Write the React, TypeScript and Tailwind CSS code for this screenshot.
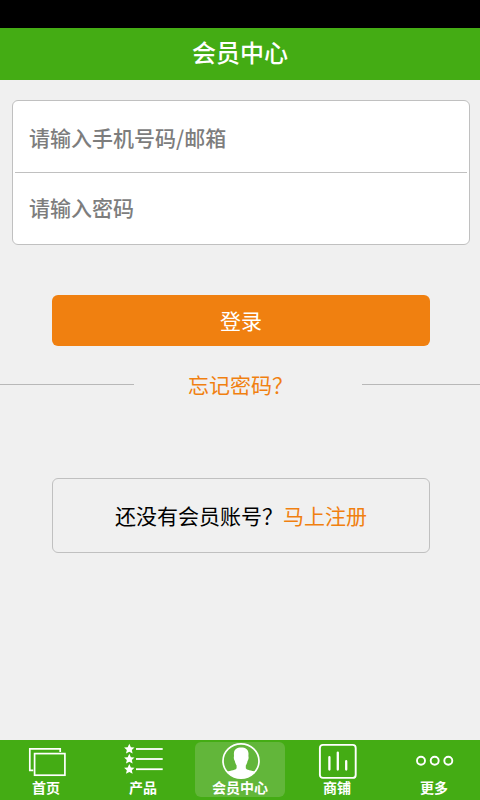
import { FormEventHandler, ReactNode, useState } from 'react';

interface Tab {
    key: string;
    label: string;
    icon: ReactNode;
}

const STAR = 'M0-5.2L1.6-1.8L5.2-1.5L2.5 1L3.3 4.6L0 2.7L-3.3 4.6L-2.5 1L-5.2-1.5L-1.6-1.8Z';

const HomeIcon = () => (
    <svg viewBox="0 0 40 36" className="h-9 w-10" fill="none" stroke="white" strokeWidth="1.7" aria-hidden="true">
        <path d="M7.3 27.4H3.8V5.8H34.2V9" />
        <rect x="8.6" y="10.6" width="30.3" height="21.6" />
    </svg>
);

const ProductIcon = () => (
    <svg viewBox="0 0 40 36" className="h-9 w-10" fill="white" aria-hidden="true">
        {[6, 16, 26.2].map((y) => (
            <g key={y}>
                <path d={STAR} transform={`translate(6.3 ${y})`} />
                <rect x="13" y={y - 0.9} width="26.7" height="1.8" />
            </g>
        ))}
    </svg>
);

const MemberIcon = () => (
    <svg viewBox="0 0 40 36" className="h-9 w-10" aria-hidden="true">
        <clipPath id="member-ring">
            <ellipse cx="21" cy="18" rx="18" ry="17.4" />
        </clipPath>
        <path
            clipPath="url(#member-ring)"
            fill="white"
            d="M21.2 4.6C17 4.6 14 6.4 13.9 10.4C13.8 11.8 14.2 12.8 13.8 14.2C13.7 16 14.4 17.4 15 18.4C15.3 20.2 15.9 21.6 16.6 22.6V25.2C16 27 11 27.4 6.6 28.8V36H35.8V28.8C31.4 27.4 26.4 27 25.8 25.2V22.6C26.5 21.6 27.1 20.2 27.4 18.4C28 17.4 28.7 16 28.6 14.2C28.2 12.8 28.6 11.8 28.5 10.4C28.4 6.4 25.4 4.6 21.2 4.6Z"
        />
        <ellipse cx="21" cy="18" rx="18" ry="17.1" fill="none" stroke="white" strokeWidth="1.7" />
    </svg>
);

const ShopIcon = () => (
    <svg viewBox="0 0 40 36" className="h-9 w-10" fill="none" stroke="white" strokeLinecap="round" aria-hidden="true">
        <rect x="2.9" y="1.9" width="35.8" height="33" rx="3" strokeWidth="1.9" />
        <path d="M12.4 14.2V26.6M20.8 9.6V26.6M29.2 18.2V26.6" strokeWidth="2.3" />
    </svg>
);

const MoreIcon = () => (
    <svg viewBox="0 0 40 36" className="h-9 w-10" fill="none" stroke="white" strokeWidth="1.9" aria-hidden="true">
        <circle cx="7" cy="17.7" r="4" />
        <circle cx="20.7" cy="17.7" r="4" />
        <circle cx="34.3" cy="17.7" r="4" />
    </svg>
);

const TABS: Tab[] = [
    { key: 'home', label: '首页', icon: <HomeIcon /> },
    { key: 'products', label: '产品', icon: <ProductIcon /> },
    { key: 'member', label: '会员中心', icon: <MemberIcon /> },
    { key: 'shops', label: '商铺', icon: <ShopIcon /> },
    { key: 'more', label: '更多', icon: <MoreIcon /> },
];

const ACTIVE_TAB = 'member';

export default function App() {
    const [account, setAccount] = useState('');
    const [password, setPassword] = useState('');

    const handleSubmit: FormEventHandler = (e) => {
        e.preventDefault();
    };

    return (
        <div className="flex min-h-screen flex-col bg-[#f0f0f0] font-['Noto_Sans_CJK_SC',sans-serif]">
            <div className="h-7 bg-black" />
            <header className="flex h-13 items-center justify-center bg-[#44ac14] pb-1">
                <h1 className="text-2xl font-medium text-white">会员中心</h1>
            </header>

            <main className="flex-1">
                <form onSubmit={handleSubmit} className="pt-5 pr-[10px] pl-3">
                    <div className="rounded-md border border-[#c0c0c0] bg-white px-0.5">
                        <input
                            type="text"
                            aria-label="请输入手机号码/邮箱"
                            placeholder="请输入手机号码/邮箱"
                            value={account}
                            onChange={(e) => setAccount(e.target.value)}
                            className="block h-18 w-full border-b border-[#c0c0c0] px-[14px] text-[21px] font-medium text-black outline-none placeholder:text-[#7d7d7d]"
                        />
                        <input
                            type="password"
                            aria-label="请输入密码"
                            placeholder="请输入密码"
                            value={password}
                            onChange={(e) => setPassword(e.target.value)}
                            className="block h-[71px] w-full px-[14px] pb-1 text-[21px] font-medium text-black outline-none placeholder:text-[#7d7d7d]"
                        />
                    </div>
                    <div className="px-10 pt-[50px]">
                        <button type="submit" className="h-[51px] w-full rounded-md bg-[#f08010] text-[21px] text-white">
                            登录
                        </button>
                    </div>
                </form>

                <div className="mt-[22px] flex items-center">
                    <span className="h-px flex-1 bg-[#b8b8b8]" />
                    <a href="#forgot" className="pr-[69px] pl-[54px] text-[21px] leading-8 text-[#f08010]">
                        忘记密码？
                    </a>
                    <span className="h-px w-[118px] bg-[#b8b8b8]" />
                </div>

                <div className="pt-[78px] pr-[10px] pl-3">
                    <p className="mx-10 flex h-[75px] items-center justify-center rounded-md border border-[#c0c0c0] text-[21px] text-black">
                        还没有会员账号？
                        <a href="#register" className="text-[#f08010]">
                            马上注册
                        </a>
                    </p>
                </div>
            </main>

            <nav className="flex h-15 justify-between bg-[#44ac14] px-px pt-0.5 pb-[3px]">
                {TABS.map((tab) => (
                    <a
                        key={tab.key}
                        href={`#${tab.key}`}
                        className={`flex w-[90px] flex-col items-center rounded-md pt-px text-sm leading-4 font-bold text-white ${
                            tab.key === ACTIVE_TAB ? 'bg-[#62b63a]' : ''
                        }`}
                    >
                        {tab.icon}
                        {tab.label}
                    </a>
                ))}
            </nav>
        </div>
    );
}
